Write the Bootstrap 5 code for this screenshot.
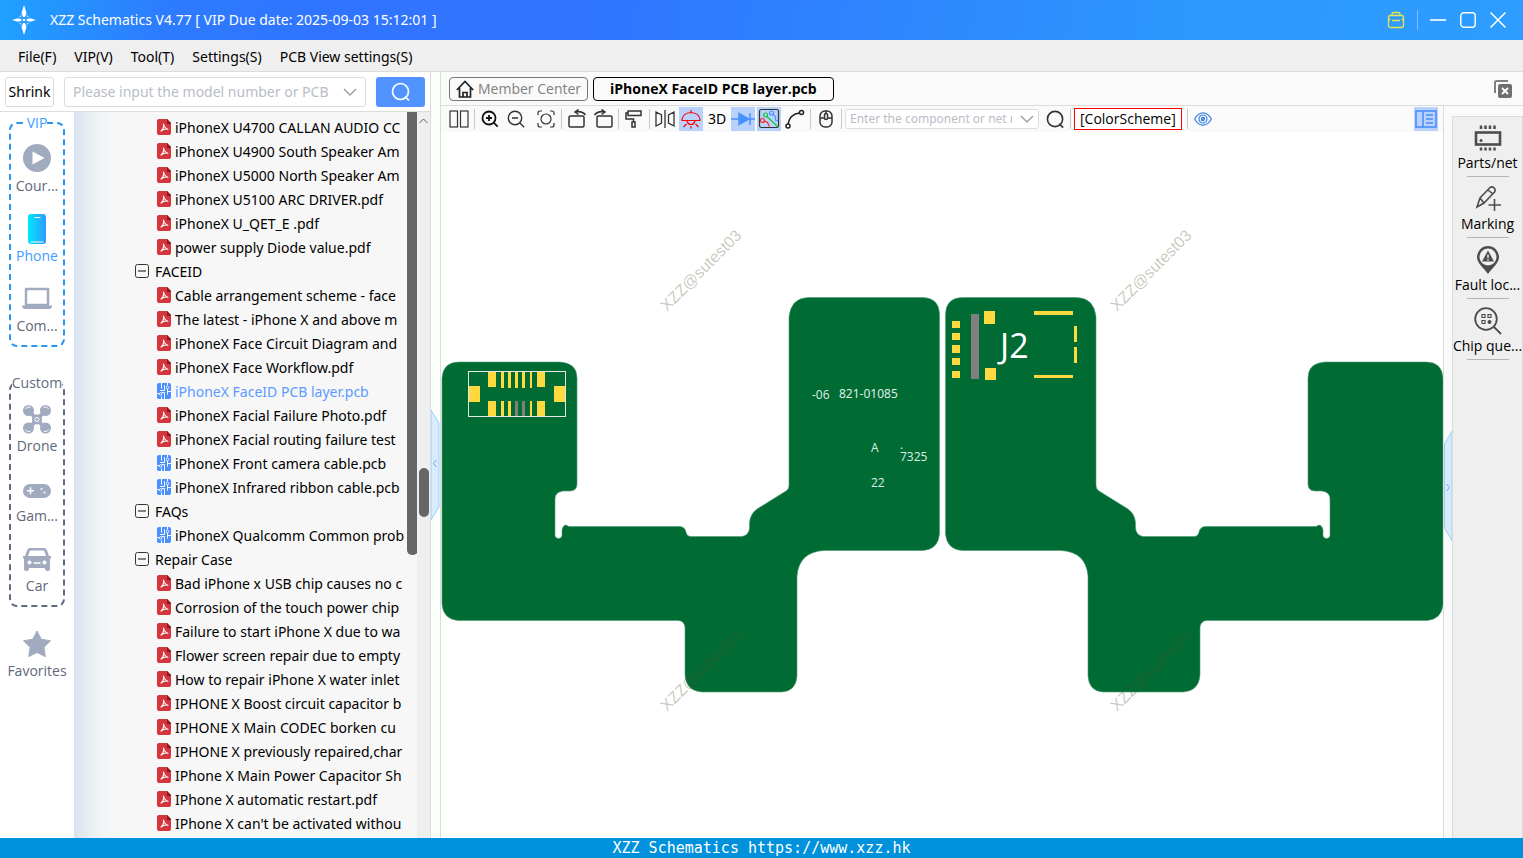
<!DOCTYPE html>
<html lang="en">
<head>
<meta charset="utf-8">
<meta name="viewport" content="width=device-width, initial-scale=1">
<title>XZZ Schematics</title>
<link href="https://cdn.jsdelivr.net/npm/bootstrap@5.3.0/dist/css/bootstrap.min.css" rel="stylesheet">
<style>
:root{--line:#dcdcdc;--soft:#fafafa;--grey:#efefef;--ui:"Noto Sans","Open Sans",sans-serif;--label:"Open Sans","Noto Sans",sans-serif}
body{font-family:var(--ui);font-size:14px;line-height:20px;color:#000;background:#fff}
button{font-family:inherit;color:inherit}
svg{display:block;flex:none}
.titlebar{height:40px;background:linear-gradient(100deg,#1fa2ff 0,#2d7bfe 11%,#3074ff 22%,#3074ff 38%,#2c97fe 78%,#2e9dff 100%);color:#fff;padding:0 17px 0 12px;gap:14px}
.winbtn{border:0;background:none;padding:0}
.wincontrols{gap:14px}
.winsep{width:1px;height:20px;background:#7cc0ff;margin:0 -2px}
.menubar{height:32px;background:var(--grey);border-bottom:1px solid var(--line);padding:2px 0 0 18px;gap:18px}
.menubar a{color:#000;text-decoration:none}
.sidepane{width:431px;border-right:1px solid var(--line);background:#fff}
.searchrow{height:40px;border-bottom:1px solid var(--line);padding:5px 5px 4px;gap:10px}
.outline-btn{width:49px;height:30px;border:1px solid var(--line);border-radius:3px;background:#fff;padding:0}
.combo{border:1px solid var(--line);border-radius:3px;background:#fff}
.combo input{border:0;outline:0;background:none;min-width:0;font-family:inherit}
.combo input::placeholder{color:#b9bdc6;opacity:1}
.netcombo{width:194px;height:20px;margin-right:2px}
.go-btn{width:49px;height:30px;background:#5193ff;border:0;border-radius:3px}
.catnav{width:74px;padding:10px 9px 0 9px;font-family:var(--label)}
.catbox{width:56px;border:2px dashed #2b95f5;border-radius:8px;height:225px;margin-bottom:35px}
.catbox.custom{border-color:#5d6b85;margin-bottom:13px}
.catlabel{background:#fff;line-height:18px;margin-top:-10px;margin-bottom:3px;color:#409eff}
.custom .catlabel{color:#5f6b80}
.catitem{width:70px;height:70px;border:0;background:none;padding:9px 0 0;color:#5f6779}
.catitem svg{margin-bottom:4px;color:#a1abc0}
.catitem.on{color:#409eff}
.tree{background:linear-gradient(90deg,#d8e2f1 0,#e6ebf3 12px,#f1f3f6 26px,#f7f7f7 42px);padding-top:3px}
.tree ul{width:333px;padding:0;margin:0;list-style:none}
.tree li{height:24px;white-space:nowrap;overflow:hidden;padding:2px 0 0 83px}
.tree li.grp{padding-left:61px}
.tree li svg{margin:0 4px 2px 0}
.tree li.grp svg{margin-right:6px}
.tree li.on{color:#5b9bff}
.thumb-in{position:absolute;left:333px;top:0;width:11px;height:61%;background:#666;border-radius:0 0 5px 5px}
.vscroll{width:13px;background:var(--grey)}
.thumb-out{position:absolute;left:2px;top:49%;width:10px;height:49px;background:#666;border-radius:5px}
.gutter{width:10px;background:#fbfffa;padding-top:20px;border-right:1px solid var(--line)}
.gutter-r{width:8px;background:var(--soft);padding-top:28px}
.tabs{height:34px;background:var(--soft);border-bottom:1px solid var(--line);padding:0 11px 0 8px;gap:5px;font-family:var(--label)}
.tabbtn{height:24px;border:1px solid #777;border-radius:4px;background:#fafafa;color:#808080;padding:0 6px;line-height:20px}
.tabbtn.on{border-color:#000;color:#000;font-weight:700;padding:0 16px}
.tools{height:26px;background:var(--soft);padding:0 5px 0 6px;gap:2px}
.tool{width:24px;height:24px;border:0;padding:0;background:none;display:grid;place-items:center}
.tool.on{background:#b9d2fb}
.vsep{width:1px;height:20px;background:#c8c8c8;margin:0 1px}
.scheme{height:22px;border:1px solid #f00;background:#fff;padding:0 5px;margin-right:2px;line-height:20px;font-family:var(--label)}
.board{border-right:1px solid var(--line)}
.rpane{background:var(--soft)}
.rpanel{width:71px;margin-top:10px;background:var(--grey);border:1px solid var(--line);border-bottom:0;font-family:var(--label)}
.ritem{width:69px;border:0;background:none;padding:7px 0 0;height:61px;white-space:nowrap}
.ritem svg{margin-bottom:1px}
.ritem::after{content:"";width:42px;height:1px;background:#b4b4b4;margin-top:3px}
.foot{height:20px;background:#0091dc;color:#fff;font:15px/20px "DejaVu Sans Mono",monospace}
</style>
</head>
<body class="vh-100 d-flex flex-column overflow-hidden">
<svg width="0" height="0" class="position-absolute" aria-hidden="true">
<symbol id="pdf" viewBox="0 0 14 16"><path d="M2 0h8l4 4v10a2 2 0 0 1-2 2H2a2 2 0 0 1-2-2V2a2 2 0 0 1 2-2z" fill="#d3373d"/><path d="M10 0l4 4v1h-4z" fill="#8e1a20"/><path d="M6.600 5c.3 2.200 1.200 4.200 4.400 5.200-2.500-.5-5 0-7 2 2-1.800 3-4.500 2.600-7.200z" fill="none" stroke="#fff" stroke-width="1.100" stroke-linejoin="round"/></symbol>
<symbol id="pcb" viewBox="0 0 14 16"><rect width="14" height="16" rx="2" fill="#4a8fff"/><path d="M4.500 0v5.500M7.500 2v5.500H3M0 10.500h2M4.500 9.500h3v6.500M10.500 6v2.500H14M10.500 8.500v3M10.500 0v2.500M4.500 13.500V16" fill="none" stroke="#fff"/><circle cx="3.500" cy="11" r="1.300" fill="none" stroke="#fff" stroke-width=".8"/><circle cx="10.500" cy="4.500" r="1.300" fill="none" stroke="#fff" stroke-width=".8"/></symbol>
<symbol id="minus" viewBox="0 0 14 14"><rect x=".5" y=".5" width="13" height="13" rx="2" fill="none" stroke="#333"/><path d="M3 7h8" stroke="#333" stroke-width="1.200"/></symbol>
<symbol id="glass" viewBox="0 0 20 20"><circle cx="9.500" cy="9.500" r="8" fill="none" stroke="currentColor" stroke-width="1.700"/><path d="M14 14.500l4 4" stroke="currentColor" stroke-width="1.700"/></symbol>
</svg>

<header class="titlebar d-flex align-items-center flex-shrink-0">
<svg width="24" height="30" viewBox="0 0 24 30" fill="#fff"><path d="M12 0l2.500 8-1.500 4h-2L9.500 8zM12 30l2.500-8-1.500-4h-2l-1.500 4zM0 15l6-1.700 3.500.9v1.600l-3.500.9zM24 15l-6-1.700-3.500.9v1.600l3.500.9z"/><path d="M8 12.500V11h1.500M14.500 11H16v1.500M16 17.500V19h-1.500M9.500 19H8v-1.500" fill="none" stroke="#bfe0ff"/><circle cx="12" cy="15" r="1.300"/></svg>
<span>XZZ Schematics V4.77 [ VIP Due date: 2025-09-03 15:12:01 ]</span>
<div class="wincontrols ms-auto d-flex align-items-center">
<button class="winbtn" aria-label="Account"><svg width="18" height="18" viewBox="0 0 18 18" fill="none" stroke="#e6e54a" stroke-width="1.300"><rect x="1.500" y="4.500" width="15" height="12" rx="2"/><path d="M5 4.500V3q0-1.500 1.500-1.500h5Q13 1.500 13 3v1.500M1.500 8.500h2M14.500 8.500h2M5 9.500h8"/></svg></button>
<span class="winsep"></span>
<button class="winbtn" aria-label="Minimise"><svg width="16" height="16" viewBox="0 0 16 16" stroke="#fff" stroke-width="1.600"><path d="M0 8h16"/></svg></button>
<button class="winbtn" aria-label="Maximise"><svg width="16" height="16" viewBox="0 0 16 16" fill="none" stroke="#fff" stroke-width="1.400"><rect x=".8" y=".8" width="14.400" height="14.400" rx="3"/></svg></button>
<button class="winbtn" aria-label="Close"><svg width="16" height="16" viewBox="0 0 16 16" stroke="#fff" stroke-width="1.500"><path d="M.5.5l15 15M15.500.5l-15 15"/></svg></button>
</div>
</header>

<nav class="menubar d-flex align-items-center flex-shrink-0">
<a href="#">File(F)</a><a href="#">VIP(V)</a><a href="#">Tool(T)</a><a href="#">Settings(S)</a><a href="#">PCB View settings(S)</a>
</nav>

<main class="d-flex flex-grow-1" style="min-height:0">
<aside class="sidepane d-flex flex-column flex-shrink-0">
<form class="searchrow d-flex flex-shrink-0">
<button type="button" class="outline-btn">Shrink</button>
<div class="combo d-flex align-items-center flex-grow-1 ps-2 pe-2" style="height:30px">
<input class="flex-grow-1 p-0" type="text" aria-label="Model number" placeholder="Please input the model number or PCB" style="color:#555">
<svg class="ms-2" width="14" height="9" viewBox="0 0 14 9" fill="none" stroke="#9aa0aa" stroke-width="1.500"><path d="M1 1l6 6 6-6"/></svg>
</div>
<button type="button" class="go-btn d-grid text-white" aria-label="Search" style="place-items:center"><svg width="20" height="20"><use href="#glass"/></svg></button>
</form>
<div class="d-flex flex-grow-1 overflow-hidden">
<nav class="catnav flex-shrink-0 d-flex flex-column align-items-center">
<div class="catbox d-flex flex-column align-items-center flex-shrink-0">
<span class="catlabel">VIP</span>
<button class="catitem d-flex flex-column align-items-center"><svg width="28" height="28" viewBox="0 0 28 28"><circle cx="14" cy="14" r="14" fill="currentColor"/><path d="M9.500 7.500v13L21.500 14z" fill="#fff"/></svg>Cour...</button>
<button class="catitem on d-flex flex-column align-items-center"><svg class="overflow-visible" width="28" height="28" viewBox="0 0 28 28"><defs><linearGradient id="ph"><stop stop-color="#00e8ff"/><stop offset="1" stop-color="#2f9bff"/></linearGradient></defs><rect x="5" y="0" width="18" height="30" rx="3" fill="url(#ph)"/><path d="M12 3.500h5M8 28h12" stroke="#fff" stroke-linecap="round"/></svg>Phone</button>
<button class="catitem d-flex flex-column align-items-center"><svg width="30" height="28" viewBox="0 0 30 28"><path d="M4 5h22v16H4z" fill="none" stroke="currentColor" stroke-width="2.500" stroke-linejoin="round"/><path d="M0 21.500h30v1.500l-2 2H2l-2-2z" fill="currentColor"/></svg>Com...</button>
</div>
<div class="catbox custom d-flex flex-column align-items-center flex-shrink-0">
<span class="catlabel">Custom</span>
<button class="catitem d-flex flex-column align-items-center"><svg class="overflow-visible" width="28" height="28" viewBox="0 0 28 28" fill="currentColor"><path d="M6 7l16 17M22 7L6 24" stroke="currentColor" stroke-width="4"/><circle cx="5.500" cy="6.500" r="5.500"/><circle cx="22.500" cy="6.500" r="5.500"/><circle cx="5.500" cy="24" r="5.500"/><circle cx="22.500" cy="24" r="5.500"/><circle cx="14" cy="15.500" r="5"/><g fill="none" stroke="#fff"><circle cx="14" cy="15.500" r="2"/><path d="M2.500 5a3.400 3.400 0 0 1 5-1.500M20.500 3.500a3.400 3.400 0 0 1 5 1.500M2.500 25.500a3.400 3.400 0 0 0 5 1.500M20.500 27a3.400 3.400 0 0 0 5-1.500"/></g></svg>Drone</button>
<button class="catitem d-flex flex-column align-items-center"><svg width="28" height="28" viewBox="0 0 28 28"><rect y="10" width="28" height="14" rx="7" fill="currentColor"/><path d="M4 16.800h7M7.500 13.300v7" stroke="#fff" stroke-width="1.500"/><circle cx="18.500" cy="15" r="1" fill="#fff"/><circle cx="21.500" cy="18.500" r="1" fill="#fff"/></svg>Gam...</button>
<button class="catitem d-flex flex-column align-items-center"><svg width="28" height="28" viewBox="0 0 28 28"><path d="M7 4h14q2 0 2.800 2L26 12l2 0v2l-1 1v10q0 2-2 2h-1q-2 0-2-2v-1H6v1q0 2-2 2H3q-2 0-2-2V15l-1-1v-2h2l2.200-6Q5 4 7 4z" fill="currentColor"/><path d="M8 6.500h12q1 0 1.400 1L23 12H5l1.600-4.500Q7 6.500 8 6.500z" fill="#fff"/><circle cx="6.500" cy="18.500" r="2" fill="#fff"/><circle cx="21.500" cy="18.500" r="2" fill="#fff"/><path d="M10.500 19h7" stroke="#fff" stroke-width="1.500"/></svg>Car</button>
</div>
<button class="catitem flex-shrink-0 d-flex flex-column align-items-center"><svg width="30" height="28" viewBox="0 0 30 28"><path d="M15 2l4.200 8.200 9.300 1.600-6.600 6.600 1.400 9.200L15 23.500l-8.300 4.100 1.400-9.200-6.600-6.600 9.300-1.600z" fill="currentColor" stroke="currentColor" stroke-linejoin="round"/></svg>Favorites</button>
</nav>
<div class="tree flex-grow-1 position-relative overflow-hidden">
<ul>
<li class="d-flex align-items-center"><svg width="14" height="16"><use href="#pdf"/></svg>iPhoneX U4700 CALLAN AUDIO CC</li>
<li class="d-flex align-items-center"><svg width="14" height="16"><use href="#pdf"/></svg>iPhoneX U4900 South Speaker Am</li>
<li class="d-flex align-items-center"><svg width="14" height="16"><use href="#pdf"/></svg>iPhoneX U5000 North Speaker Am</li>
<li class="d-flex align-items-center"><svg width="14" height="16"><use href="#pdf"/></svg>iPhoneX U5100 ARC DRIVER.pdf</li>
<li class="d-flex align-items-center"><svg width="14" height="16"><use href="#pdf"/></svg>iPhoneX U_QET_E .pdf</li>
<li class="d-flex align-items-center"><svg width="14" height="16"><use href="#pdf"/></svg>power supply Diode value.pdf</li>
<li class="grp d-flex align-items-center"><svg width="14" height="14"><use href="#minus"/></svg>FACEID</li>
<li class="d-flex align-items-center"><svg width="14" height="16"><use href="#pdf"/></svg>Cable arrangement scheme - face</li>
<li class="d-flex align-items-center"><svg width="14" height="16"><use href="#pdf"/></svg>The latest - iPhone X and above m</li>
<li class="d-flex align-items-center"><svg width="14" height="16"><use href="#pdf"/></svg>iPhoneX Face Circuit Diagram and</li>
<li class="d-flex align-items-center"><svg width="14" height="16"><use href="#pdf"/></svg>iPhoneX Face Workflow.pdf</li>
<li class="on d-flex align-items-center"><svg width="14" height="16"><use href="#pcb"/></svg>iPhoneX FaceID PCB layer.pcb</li>
<li class="d-flex align-items-center"><svg width="14" height="16"><use href="#pdf"/></svg>iPhoneX Facial Failure Photo.pdf</li>
<li class="d-flex align-items-center"><svg width="14" height="16"><use href="#pdf"/></svg>iPhoneX Facial routing failure test</li>
<li class="d-flex align-items-center"><svg width="14" height="16"><use href="#pcb"/></svg>iPhoneX Front camera cable.pcb</li>
<li class="d-flex align-items-center"><svg width="14" height="16"><use href="#pcb"/></svg>iPhoneX Infrared ribbon cable.pcb</li>
<li class="grp d-flex align-items-center"><svg width="14" height="14"><use href="#minus"/></svg>FAQs</li>
<li class="d-flex align-items-center"><svg width="14" height="16"><use href="#pcb"/></svg>iPhoneX Qualcomm Common prob</li>
<li class="grp d-flex align-items-center"><svg width="14" height="14"><use href="#minus"/></svg>Repair Case</li>
<li class="d-flex align-items-center"><svg width="14" height="16"><use href="#pdf"/></svg>Bad iPhone x USB chip causes no c</li>
<li class="d-flex align-items-center"><svg width="14" height="16"><use href="#pdf"/></svg>Corrosion of the touch power chip</li>
<li class="d-flex align-items-center"><svg width="14" height="16"><use href="#pdf"/></svg>Failure to start iPhone X due to wa</li>
<li class="d-flex align-items-center"><svg width="14" height="16"><use href="#pdf"/></svg>Flower screen repair due to empty</li>
<li class="d-flex align-items-center"><svg width="14" height="16"><use href="#pdf"/></svg>How to repair iPhone X water inlet</li>
<li class="d-flex align-items-center"><svg width="14" height="16"><use href="#pdf"/></svg>IPHONE X Boost circuit capacitor b</li>
<li class="d-flex align-items-center"><svg width="14" height="16"><use href="#pdf"/></svg>IPHONE X Main CODEC borken cu</li>
<li class="d-flex align-items-center"><svg width="14" height="16"><use href="#pdf"/></svg>IPHONE X previously repaired,char</li>
<li class="d-flex align-items-center"><svg width="14" height="16"><use href="#pdf"/></svg>IPhone X Main Power Capacitor Sh</li>
<li class="d-flex align-items-center"><svg width="14" height="16"><use href="#pdf"/></svg>IPhone X automatic restart.pdf</li>
<li class="d-flex align-items-center"><svg width="14" height="16"><use href="#pdf"/></svg>IPhone X can't be activated withou</li>
</ul>
<div class="thumb-in"></div>
</div>
<div class="vscroll position-relative flex-shrink-0"><svg class="mx-auto mt-1" width="9" height="9" viewBox="0 0 9 9" fill="none" stroke="#555"><path d="M.5 7l4-4 4 4"/></svg><div class="thumb-out"></div></div>
</div>
</aside>

<div class="gutter flex-shrink-0 d-flex align-items-center"><svg width="9" height="110" viewBox="0 0 9 110"><path d="M0 0l8 13v84l-8 13z" fill="#d9ecff" stroke="#9fcdfb"/><path d="M5.500 50l-3 3.500 3 3.500" fill="none" stroke="#5fa8f0"/></svg></div>

<section class="flex-grow-1 d-flex flex-column" style="min-width:0">
<div class="tabs d-flex align-items-center flex-shrink-0">
<button class="tabbtn d-flex align-items-center"><svg class="me-1" width="18" height="18" viewBox="0 0 18 18" fill="none" stroke="#222" stroke-width="1.700"><path d="M.8 10L9 1.500l8.200 8.500M3.500 8v9h11V8M7 17v-4.500h4V17"/></svg>Member Center</button>
<button class="tabbtn on">iPhoneX FaceID PCB layer.pcb</button>
<button class="winbtn ms-auto" aria-label="Close all"><svg width="18" height="18" viewBox="0 0 18 18"><path d="M1 13V2.500Q1 1 2.500 1H14" fill="none" stroke="#808080" stroke-width="2"/><rect x="4" y="4" width="14" height="14" rx="2" fill="#707070"/><path d="M8 8l6 6M14 8l-6 6" stroke="#fff" stroke-width="1.800"/></svg></button>
</div>
<div class="d-flex flex-grow-1" style="min-height:0">
<div class="board flex-grow-1 d-flex flex-column" style="min-width:0">
<div class="tools d-flex align-items-center flex-shrink-0">
<button class="tool" aria-label="Split view"><svg width="20" height="18" viewBox="0 0 20 18" fill="none" stroke="#333" stroke-width="1.200"><rect x="1" y="1" width="7.500" height="16"/><rect x="11.500" y="1" width="7.500" height="16"/></svg></button>
<span class="vsep"></span>
<button class="tool" aria-label="Zoom in"><svg width="18" height="18" viewBox="0 0 18 18" fill="none" stroke="#111" stroke-width="1.800"><circle cx="8" cy="8" r="6.500"/><path d="M12.700 12.700l4 4M8 5v6M5 8h6"/></svg></button>
<button class="tool" aria-label="Zoom out"><svg width="18" height="18" viewBox="0 0 18 18" fill="none" stroke="#333" stroke-width="1.400"><circle cx="8" cy="8" r="6.700"/><path d="M12.900 12.900l4.300 4.300M5 8h6"/></svg></button>
<button class="tool ms-1" aria-label="Fit"><svg width="18" height="18" viewBox="0 0 18 18" fill="none" stroke="#333" stroke-width="1.200"><circle cx="9" cy="9" r="5"/><path d="M1 5V3q0-2 2-2h2M13 1h2q2 0 2 2v2M17 13v2q0 2-2 2h-2M5 17H3q-2 0-2-2v-2"/></svg></button>
<span class="vsep"></span>
<button class="tool" aria-label="Rotate right"><svg width="20" height="20" viewBox="0 0 20 20" fill="none" stroke="#333" stroke-width="1.500"><rect x="2" y="7" width="15" height="11" rx="1.500"/><path d="M8 3q7-1.500 10.500 3M11.500.5L8 3l3.500 2.500"/></svg></button>
<button class="tool" aria-label="Rotate left"><svg width="20" height="20" viewBox="0 0 20 20" fill="none" stroke="#333" stroke-width="1.500"><rect x="4" y="7" width="15" height="11" rx="1.500"/><path d="M12 3Q5 1.500 1.500 6M8.500.5L12 3 8.500 5.500"/></svg></button>
<span class="vsep"></span>
<button class="tool" aria-label="Paint"><svg width="18" height="20" viewBox="0 0 18 20" fill="none" stroke="#333" stroke-width="1.500"><rect x="3" y="2" width="13" height="4.500"/><path d="M3 4H1v6h7.500v3M7 13h3v5H7z"/></svg></button>
<span class="vsep"></span>
<button class="tool" aria-label="Mirror"><svg width="20" height="18" viewBox="0 0 20 18" fill="none" stroke="#333" stroke-width="1.300"><path d="M1 2v14l5.500-3V5zM19 2v14l-5.500-3V5zM10 0v18"/></svg></button>
<button class="tool on" aria-label="Lamp"><svg width="20" height="20" viewBox="0 0 20 20" fill="none" stroke="#f00" stroke-width="1.200"><path d="M1 10.500Q2 4 10 3.500 18 4 19 10.500v1H1zM10 1v3M6 12q1 3.500 4 3.500t4-3.500M10 17v2.500M5.500 15l-3 3M14.500 15l3 3"/></svg></button>
<button class="tool">3D</button>
<button class="tool on" aria-label="Diode"><svg width="24" height="14" viewBox="0 0 24 14" stroke="#4a90ff" stroke-width="1.500"><path d="M0 7h24M19 1v12" fill="none"/><path d="M8 1.500v11L18 7z" fill="#4a90ff"/></svg></button>
<button class="tool on" aria-label="Nets"><svg width="22" height="22" viewBox="0 0 22 22" fill="none" stroke-width="1.200"><rect x="1.500" y="1.500" width="19" height="18" rx="2" stroke="#333"/><circle cx="7.500" cy="7" r="2" stroke="#17c53a"/><path d="M9 8.500l11 10.500" stroke="#17c53a"/><circle cx="4.500" cy="12.500" r="2" stroke="#f22"/><path d="M6.500 13l3 1.500 2 4" stroke="#f22"/><circle cx="13.500" cy="5" r="2" stroke="#4a90ff"/><path d="M15 6.500l2.500 2v3.500l2.500 1" stroke="#4a90ff"/></svg></button>
<button class="tool" aria-label="Route"><svg width="20" height="20" viewBox="0 0 20 20" fill="none" stroke="#222" stroke-width="1.500"><circle cx="16.500" cy="3.500" r="2"/><circle cx="3" cy="17" r="2"/><path d="M3 15Q5 5 14.500 4"/></svg></button>
<span class="vsep"></span>
<button class="tool" aria-label="Mouse"><svg width="14" height="18" viewBox="0 0 14 18" fill="none" stroke="#333" stroke-width="1.500"><rect x="1" y="1" width="12" height="16" rx="5"/><path d="M1 8h12M7 1v2"/><rect x="5.500" y="3.500" width="3" height="6" rx="1.500" fill="#fff"/></svg></button>
<span class="vsep"></span>
<div class="combo netcombo d-flex align-items-center ps-0 pe-1"><input class="flex-grow-1 p-0 ms-1" type="text" aria-label="Component or net" placeholder="Enter the component or net name" style="font-size:12px"><svg class="ms-2" width="14" height="9" viewBox="0 0 14 9" fill="none" stroke="#9aa0aa" stroke-width="1.500"><path d="M1 1l6 6 6-6"/></svg></div>
<button class="tool" aria-label="Find" style="color:#333"><svg width="19" height="19"><use href="#glass" width="19" height="19"/></svg></button>
<span class="vsep"></span>
<button class="scheme">[ColorScheme]</button>
<span class="vsep"></span>
<button class="tool" aria-label="Visibility"><svg width="18" height="14" viewBox="0 0 18 14" fill="none" stroke="#3b82e0" stroke-width="1.200"><path d="M.7 7Q4 .8 9 .8T17.300 7Q14 13.200 9 13.200T.7 7z"/><circle cx="9" cy="7" r="4"/><path d="M7.500 8.500l3-3"/><circle cx="9" cy="7" r="1.600"/></svg></button>
<button class="tool on ms-auto" aria-label="Panel"><svg width="22" height="18" viewBox="0 0 22 18" fill="none" stroke="#4a8fff" stroke-width="1.600"><rect x="1" y="1" width="20" height="16"/><path d="M8 1v16M11 5h7M11 9h7M11 13h7"/></svg></button>
</div>
<svg class="w-100 flex-grow-1" style="min-height:0;flex-basis:0" viewBox="441 132 1002 706" role="img" aria-label="Board layout" font-family="Open Sans, Noto Sans, sans-serif">
<defs><path id="flex" d="M442 378Q443 362 459 362H560Q577 363 577 378V484Q577 491 570 491H563Q555 492 555 499V536Q556 538.500 558.500 538.500T562 536V530Q563 525 566 525L569 526.500H680Q685 527 686 532T692 536.500H742Q749 535 749.500 528V523Q750 514 757 509L786 491Q789 489 789 485V317Q791 298 808 297.500H923Q939 298 939.500 314V534Q938 550 922 550.500H824Q799 552 797 576V676Q796 691 782 692H702Q686 691 685 675V627Q684 620.500 678 620.500H458Q443 619 442 604Z"/></defs>
<g fill="#006b33" stroke="#4f9a74" stroke-width=".6"><use href="#flex"/><use href="#flex" transform="translate(1885 0) scale(-1 1)"/></g>
<rect x="468.500" y="371.500" width="97" height="45" fill="none" stroke="#e6e6e6"/>
<g fill="#ffd940"><path d="M469 386h11v16h-11zM554 386h11v16h-11zM488 372h8v15h-8zM537 372h8v15h-8zM488 401h8v15h-8zM537 401h8v15h-8zM501 372h3v16h-3zM508 372h3v16h-3zM515 372h3v16h-3zM522 372h3v16h-3zM530 372h2v16h-2zM501 401h3v15h-3zM508 401h3v15h-3zM530 401h2v15h-2z"/><path d="M952 321h8v7h-8zM952 333h8v7h-8zM952 345h8v8h-8zM952 358h8v7h-8zM952 371h8v7h-8zM984 311h11v13h-11zM985 368h11v12h-11zM1034 311h39v4h-39zM1034 375h39v3h-39zM1074 326h3v16h-3zM1074 347h3v16h-3z"/></g>
<path d="M515 401h3v15h-3zM522 401h3v15h-3zM971 314h8v65h-8z" fill="#808080"/>
<g fill="#dfeee5" font-size="12"><text x="812" y="399">-06</text><text x="839" y="398" font-family="Noto Sans">821-01085</text><text x="871" y="452">A</text><text x="900" y="449">.</text><text x="900" y="461">7325</text><text x="871" y="487">22</text></g>
<text x="1000" y="358" font-size="34" fill="#fff">J2</text>
<g fill="#5a5030" fill-opacity=".32" font-family="Liberation Sans, sans-serif" font-size="16"><text transform="translate(667 312) rotate(-45)">XZZ@sutest03</text><text transform="translate(1117 312) rotate(-45)">XZZ@sutest03</text><text transform="translate(667 712) rotate(-45)">XZZ@sutest03</text><text transform="translate(1117 712) rotate(-45)">XZZ@sutest03</text></g>
</svg>
</div>
<div class="rpane d-flex flex-shrink-0">
<div class="gutter-r d-flex align-items-center"><svg width="8" height="110" viewBox="0 0 8 110"><path d="M8 0L.5 13v84L8 110z" fill="#d9ecff" stroke="#9fcdfb"/><path d="M2.500 53l3 3.500-3 3.500" fill="none" stroke="#5fa8f0"/></svg></div>
<div class="rpanel d-flex flex-column">
<button class="ritem d-flex flex-column align-items-center"><svg width="28" height="28" viewBox="0 0 28 28" fill="none" stroke="#4d4d4d"><rect x="2" y="8.500" width="24" height="12" stroke-width="2.600"/><circle cx="7" cy="16.500" r="1.500" fill="#4d4d4d" stroke="none"/><path d="M7 1.500v3.500M11.500 1.500v3.500M16 1.500v3.500M20.500 1.500v3.500M7 23.500v3M11.500 23.500v3M16 23.500v3M20.500 23.500v3" stroke-width="2.500"/></svg>Parts/net</button>
<button class="ritem d-flex flex-column align-items-center"><svg width="28" height="28" viewBox="0 0 28 28" fill="none" stroke="#4d4d4d" stroke-width="1.600"><path d="M3 22l3-9L16 2.500q2-1.500 4 .3t.5 4.200L10 18zM14 5l5 4M6 13l4 5M20.500 14v12M14.500 20H27"/></svg>Marking</button>
<button class="ritem d-flex flex-column align-items-center"><svg width="28" height="28" viewBox="0 0 28 28"><path d="M14 0a11 11 0 0 1 11 11c0 6-6 10-11 17C9 21 3 17 3 11A11 11 0 0 1 14 0z" fill="#4d4d4d"/><circle cx="14" cy="11" r="8.500" fill="#efefef"/><path d="M14 4.500l6 11H8z" fill="#4d4d4d"/><path d="M14 8.500v3.500M14 13v1.500" stroke="#efefef" stroke-width="1.400"/></svg>Fault loc...</button>
<button class="ritem d-flex flex-column align-items-center"><svg width="28" height="28" viewBox="0 0 28 28" fill="none" stroke="#4d4d4d" stroke-width="1.800"><circle cx="12" cy="12" r="10.800"/><path d="M20 20l7 7"/><path d="M8 7.500h3v3H8zM14 7.500h3v3h-3zM8 13.500h3v3H8z" stroke-width="1.200"/><circle cx="15.500" cy="15" r="2" fill="#4d4d4d" stroke="none"/></svg>Chip que...</button>
</div>
</div>
</div>
</section>
</main>
<footer class="foot text-center flex-shrink-0">XZZ Schematics https://www.xzz.hk</footer>
<script src="https://cdn.jsdelivr.net/npm/bootstrap@5.3.0/dist/js/bootstrap.bundle.min.js"></script>
</body>
</html>
